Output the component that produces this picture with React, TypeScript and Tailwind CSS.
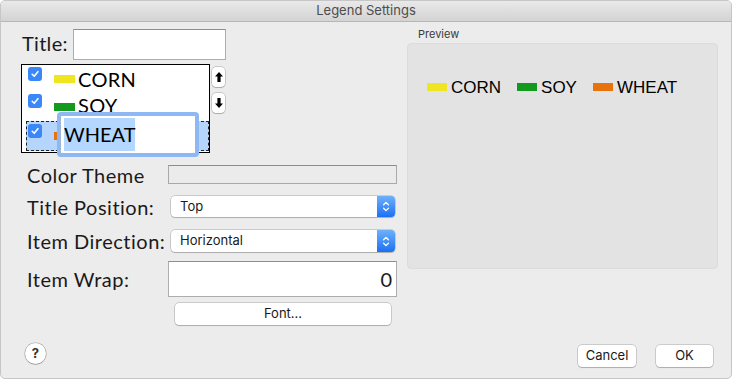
import React from "react";

function Checkbox() {
  return (
    <div className="w-[14px] h-[14px] rounded-[3px] bg-[#3a87f7] flex items-center justify-center shrink-0">
      <svg width="10" height="10" viewBox="0 0 10 10">
        <path d="M2.2 5.3 L4.2 7.3 L7.9 2.7" stroke="white" strokeWidth="1.6" fill="none" strokeLinecap="round" strokeLinejoin="round" />
      </svg>
    </div>
  );
}

function ArrowButton({ down }: { down?: boolean }) {
  return (
    <div className="w-[13px] h-[20px] rounded-[4px] bg-white shadow-[0_0_0_0.5px_rgba(0,0,0,0.3),0_1px_1px_rgba(0,0,0,0.15)] flex items-center justify-center">
      <svg width="8" height="10" viewBox="0 0 8 10" className={down ? "rotate-180" : ""}>
        <path d="M4 0 L8 4.6 H5.6 V10 H2.4 V4.6 H0 Z" fill="black" />
      </svg>
    </div>
  );
}

function Select({ label }: { label: string }) {
  return (
    <div className="ml-[3px] w-[224px] h-full rounded-[4px] bg-white shadow-[0_0_0_0.5px_rgba(0,0,0,0.28),0_1px_1px_rgba(0,0,0,0.15)] flex items-center overflow-hidden">
      <span className="flex-1 pl-[9px] text-[13px] text-[#1a1a1a] font-['Inter',sans-serif]">{label}</span>
      <div className="w-[18px] h-full bg-gradient-to-b from-[#6db0fa] to-[#1a6ff3] flex items-center justify-center">
        <svg width="8" height="13" viewBox="0 0 8 13">
          <path d="M1.6 4.8 L4 2.4 L6.4 4.8 M1.6 8.2 L4 10.6 L6.4 8.2" stroke="white" strokeWidth="1.3" fill="none" strokeLinecap="round" strokeLinejoin="round" />
        </svg>
      </div>
    </div>
  );
}

function MacButton({ children, className }: { children: React.ReactNode; className: string }) {
  return (
    <div className={"rounded-[4px] bg-white shadow-[0_0_0_0.5px_rgba(0,0,0,0.28),0_1px_1px_rgba(0,0,0,0.15)] flex items-center justify-center text-[13px] text-[#1a1a1a] font-['Inter',sans-serif] " + className}>
      {children}
    </div>
  );
}

const labelCls = "ml-[6px] w-[141px] shrink-0 text-[20px] tracking-[0.5px] leading-none text-[#1a1a1a] font-['Lato',sans-serif]";

export default function App() {
  return (
    <div className="w-[733px] h-[379px] bg-white">
      <div className="w-[732px] h-[379px] rounded-[5px] border border-[#c6c6c6] bg-[#ececec] overflow-hidden flex flex-col">
        <div className="h-[21px] shrink-0 bg-gradient-to-b from-[#e9e9e9] to-[#d3d3d3] border-b border-[#b7b7b7] flex items-center justify-center text-[13px] text-[#4d4d4d] font-['Inter',sans-serif]">
          Legend Settings
        </div>
        <div className="flex flex-1">
          {/* Left column */}
          <div className="w-[405px] shrink-0 pl-[20px] flex flex-col">
            <div className="mt-[7px] h-[31px] flex items-center">
              <span className="ml-[1px] w-[51px] text-[20px] tracking-[0.3px] leading-none text-[#1a1a1a] font-['Lato',sans-serif] -mt-[4px]">Title:</span>
              <div className="w-[153px] h-[31px] bg-white border border-[#adadad] border-t-[#8f8f8f]" />
            </div>
            <div className="mt-[4px] flex items-start">
              <div className="relative w-[189px] h-[89px] border border-black bg-white pl-[4px] font-['Lato',sans-serif] text-[20px] tracking-[0.3px] leading-none text-black">
                <div className="h-[27px] flex items-center pl-[2px]">
                  <div className="self-start mt-[2px]"><Checkbox /></div>
                  <div className="ml-[12px] w-[21px] h-[8px] bg-[#efe521]" />
                  <span className="ml-[3px]">CORN</span>
                </div>
                <div className="h-[29px] flex items-center pl-[2px]">
                  <div className="self-start mt-[2px]"><Checkbox /></div>
                  <div className="ml-[12px] w-[21px] h-[8px] bg-[#13991d]" />
                  <span className="ml-[3px] -mt-[4px]">SOY</span>
                </div>
                <div className="h-[30px] flex items-center pl-[1px] bg-[#b5d5fc] border border-dashed border-[#222]">
                  <div className="self-start mt-[2px]"><Checkbox /></div>
                  <div className="ml-[12px] w-[21px] h-[8px] bg-[#e8720c]" />
                  <span className="ml-[3px]">WHEAT</span>
                </div>
                <div className="absolute left-[35px] top-[47px] w-[142px] h-[45px] rounded-[4px] bg-[#8db8f4] p-[3px]">
                  <div className="w-full h-full bg-white border border-[#9cb7da] pl-[3px] pt-[2px]">
                    <span className="inline-block bg-[#b3d7ff] leading-[33px] text-[20px] tracking-normal text-black">WHEAT</span>
                  </div>
                </div>
              </div>
              <div className="ml-[2px] mt-[3px] flex flex-col gap-[6px]">
                <ArrowButton />
                <ArrowButton down />
              </div>
            </div>
            <div className="mt-[12px] h-[19px] flex items-center">
              <span className={labelCls}>Color Theme</span>
              <div className="w-[229px] h-[19px] bg-[#ebebeb] border border-[#a9a9a9] border-t-[#8d8d8d]" />
            </div>
            <div className="mt-[12px] h-[21px] flex items-center">
              <span className={labelCls}>Title Position:</span>
              <Select label="Top" />
            </div>
            <div className="mt-[13px] h-[22px] flex items-center">
              <span className={labelCls}>Item Direction:</span>
              <Select label="Horizontal" />
            </div>
            <div className="mt-[9px] h-[36px] flex items-center">
              <span className={labelCls}>Item Wrap:</span>
              <div className="w-[229px] h-[36px] bg-white border border-[#adadad] border-t-[#8f8f8f] flex items-center justify-end pr-[4px] text-[20px] leading-none font-['Lato',sans-serif] text-[#1a1a1a]">
                0
              </div>
            </div>
            <MacButton className="mt-[6px] ml-[154px] w-[216px] h-[22px]">Font...</MacButton>
            <div className="mt-[18px] ml-[4px] w-[21px] h-[21px] rounded-full bg-white shadow-[0_0_0_0.5px_rgba(0,0,0,0.3),0_1px_1px_rgba(0,0,0,0.15)] flex items-center justify-center text-[13px] font-bold text-[#333] font-['Inter',sans-serif]">
              ?
            </div>
          </div>
          {/* Right column */}
          <div className="flex-1 flex flex-col">
            <div className="mt-[6px] h-[13px] pl-[12px] text-[11px] leading-[13px] text-[#3a3a3a] font-['Inter',sans-serif]">Preview</div>
            <div className="mt-[2px] ml-[1px] w-[311px] h-[226px] rounded-[4px] bg-[#e3e3e3] border border-[#dcdcdc] pl-[19px] pt-[35px]">
              <div className="h-[16px] flex items-center gap-[16px] font-['Liberation_Sans',sans-serif] text-[17px] leading-none text-black">
                <div className="flex items-center gap-[4px]">
                  <div className="w-[20px] h-[8px] bg-[#efe521]" />
                  <span>CORN</span>
                </div>
                <div className="flex items-center gap-[4px]">
                  <div className="w-[20px] h-[8px] bg-[#13991d]" />
                  <span>SOY</span>
                </div>
                <div className="flex items-center gap-[4px]">
                  <div className="w-[20px] h-[8px] bg-[#e8720c]" />
                  <span>WHEAT</span>
                </div>
              </div>
            </div>
            <div className="mt-[76px] pr-[18px] flex justify-end gap-[20px]">
              <MacButton className="w-[58px] h-[22px]">Cancel</MacButton>
              <MacButton className="w-[57px] h-[22px]">OK</MacButton>
            </div>
          </div>
        </div>
      </div>
    </div>
  );
}
